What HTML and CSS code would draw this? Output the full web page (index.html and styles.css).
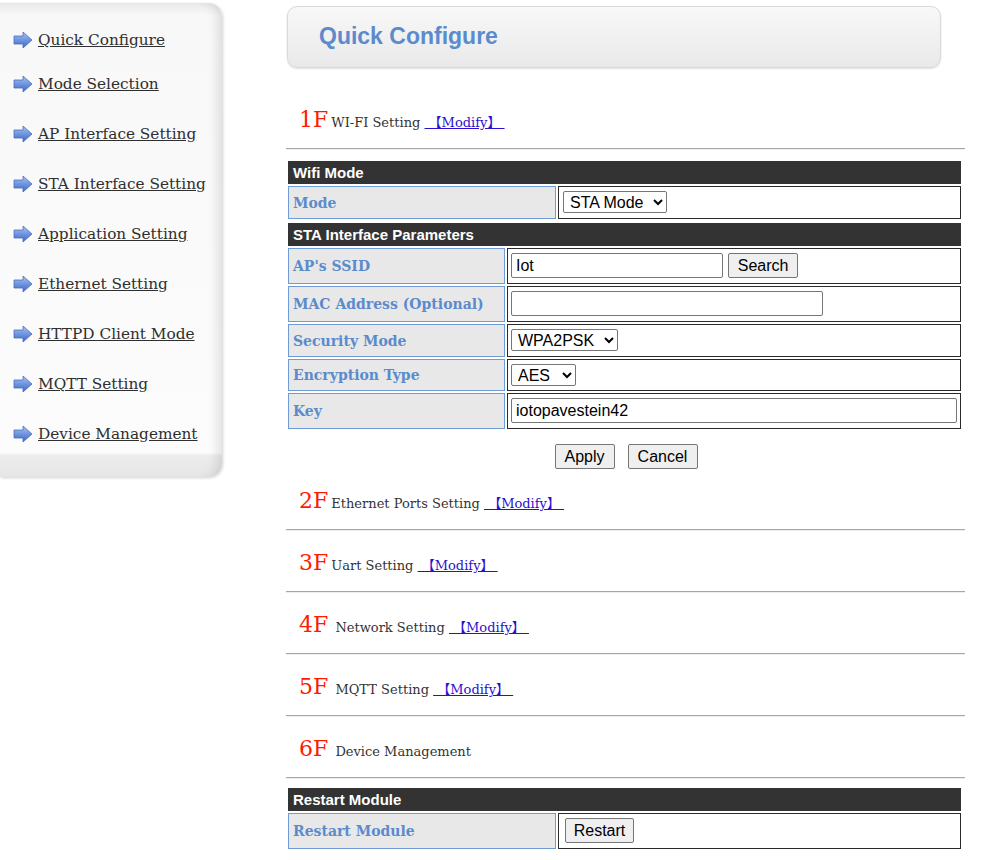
FILE: index.html
```html
<!DOCTYPE html>
<html>
<head>
<meta charset="utf-8">
<title>Quick Configure</title>
<link rel="stylesheet" href="styles.css">
</head>
<body>
<div class="page">
  <nav class="sidebar">
    <ul class="menu">
      <li><a href="#"><svg class="arrow" viewBox="0 0 20 18" width="20" height="18"><defs><linearGradient id="ag" x1="0" y1="0" x2="0" y2="1"><stop offset="0" stop-color="#a9c3f0"/><stop offset="0.5" stop-color="#6f95df"/><stop offset="1" stop-color="#3f66c4"/></linearGradient></defs><path d="M1 5H10V1L19 9L10 17V13H1Z" fill="url(#ag)" stroke="#4a6cc0" stroke-width="0.8" stroke-linejoin="round"/></svg>Quick Configure</a></li>
      <li><a href="#"><svg class="arrow" viewBox="0 0 20 18" width="20" height="18"><path d="M1 5H10V1L19 9L10 17V13H1Z" fill="url(#ag)" stroke="#4a6cc0" stroke-width="0.8" stroke-linejoin="round"/></svg>Mode Selection</a></li>
      <li><a href="#"><svg class="arrow" viewBox="0 0 20 18" width="20" height="18"><path d="M1 5H10V1L19 9L10 17V13H1Z" fill="url(#ag)" stroke="#4a6cc0" stroke-width="0.8" stroke-linejoin="round"/></svg>AP Interface Setting</a></li>
      <li><a href="#"><svg class="arrow" viewBox="0 0 20 18" width="20" height="18"><path d="M1 5H10V1L19 9L10 17V13H1Z" fill="url(#ag)" stroke="#4a6cc0" stroke-width="0.8" stroke-linejoin="round"/></svg>STA Interface Setting</a></li>
      <li><a href="#"><svg class="arrow" viewBox="0 0 20 18" width="20" height="18"><path d="M1 5H10V1L19 9L10 17V13H1Z" fill="url(#ag)" stroke="#4a6cc0" stroke-width="0.8" stroke-linejoin="round"/></svg>Application Setting</a></li>
      <li><a href="#"><svg class="arrow" viewBox="0 0 20 18" width="20" height="18"><path d="M1 5H10V1L19 9L10 17V13H1Z" fill="url(#ag)" stroke="#4a6cc0" stroke-width="0.8" stroke-linejoin="round"/></svg>Ethernet Setting</a></li>
      <li><a href="#"><svg class="arrow" viewBox="0 0 20 18" width="20" height="18"><path d="M1 5H10V1L19 9L10 17V13H1Z" fill="url(#ag)" stroke="#4a6cc0" stroke-width="0.8" stroke-linejoin="round"/></svg>HTTPD Client Mode</a></li>
      <li><a href="#"><svg class="arrow" viewBox="0 0 20 18" width="20" height="18"><path d="M1 5H10V1L19 9L10 17V13H1Z" fill="url(#ag)" stroke="#4a6cc0" stroke-width="0.8" stroke-linejoin="round"/></svg>MQTT Setting</a></li>
      <li><a href="#"><svg class="arrow" viewBox="0 0 20 18" width="20" height="18"><path d="M1 5H10V1L19 9L10 17V13H1Z" fill="url(#ag)" stroke="#4a6cc0" stroke-width="0.8" stroke-linejoin="round"/></svg>Device Management</a></li>
    </ul>
  </nav>

  <main class="main">
    <div class="titlebox"><h1 class="title">Quick Configure</h1></div>

    <div class="floor first"><span class="line"><span class="num">1F</span>WI-FI Setting <a class="modify" href="#">&nbsp;【Modify】&nbsp;</a></span></div>
    <hr class="sep">

    <table class="cfg wide top">
      <tr><th colspan="2" class="bar">Wifi Mode</th></tr>
      <tr>
        <td class="lbl">Mode</td>
        <td class="val tall"><select class="sel sel-mode"><option>STA Mode</option></select></td>
      </tr>
    </table>
    <table class="cfg narrow">
      <tr><th colspan="2" class="bar">STA Interface Parameters</th></tr>
      <tr>
        <td class="lbl">AP's SSID</td>
        <td class="val tall"><input class="txt txt-ssid" type="text" value="Iot"> <button class="btn btn-search">Search</button></td>
      </tr>
      <tr>
        <td class="lbl">MAC Address (Optional)</td>
        <td class="val tall"><input class="txt txt-mac" type="text" value=""></td>
      </tr>
      <tr>
        <td class="lbl">Security Mode</td>
        <td class="val tall"><select class="sel sel-sec"><option>WPA2PSK</option></select></td>
      </tr>
      <tr>
        <td class="lbl">Encryption Type</td>
        <td class="val"><select class="sel sel-enc"><option>AES</option></select></td>
      </tr>
      <tr>
        <td class="lbl">Key</td>
        <td class="val tall"><input class="txt txt-key" type="text" value="iotopavestein42"></td>
      </tr>
    </table>

    <div class="actions"><button class="btn btn-apply">Apply</button><button class="btn btn-cancel">Cancel</button></div>

    <div class="floor"><span class="line"><span class="num">2F</span>Ethernet Ports Setting <a class="modify" href="#">&nbsp;【Modify】&nbsp;</a></span></div>
    <hr class="sep">
    <div class="floor"><span class="line"><span class="num">3F</span>Uart Setting <a class="modify" href="#">&nbsp;【Modify】&nbsp;</a></span></div>
    <hr class="sep">
    <div class="floor"><span class="line"><span class="num">4F</span> Network Setting <a class="modify" href="#">&nbsp;【Modify】&nbsp;</a></span></div>
    <hr class="sep">
    <div class="floor"><span class="line"><span class="num">5F</span> MQTT Setting <a class="modify" href="#">&nbsp;【Modify】&nbsp;</a></span></div>
    <hr class="sep">
    <div class="floor"><span class="line"><span class="num">6F</span> Device Management</span></div>
    <hr class="sep">

    <table class="cfg wide restart">
      <tr><th colspan="2" class="bar">Restart Module</th></tr>
      <tr>
        <td class="lbl">Restart Module</td>
        <td class="val tall"><button class="btn btn-restart">Restart</button></td>
      </tr>
    </table>
  </main>
</div>
</body>
</html>
```

FILE: styles.css
```css
html, body {
  margin: 0;
  padding: 0;
  background: #ffffff;
}

body {
  font-family: "DejaVu Serif", "Liberation Serif", serif;
  color: #333333;
}

.page {
  display: flex;
  align-items: flex-start;
  gap: 64px;
}

/* ---------- sidebar ---------- */
.sidebar {
  flex: 0 0 auto;
  width: 222px;
  box-sizing: border-box;
  margin-top: 3px;
  padding: 25px 0 31px 13px;
  border-radius: 0 14px 14px 0;
  background: linear-gradient(to bottom, #e9e9e9 0, #f8f8f8 12px, #fcfcfc calc(100% - 24px), #ededed calc(100% - 22px), #e6e6e6 100%);
  box-shadow: inset -12px 0 12px -8px rgba(0, 0, 0, 0.12), 1px 1px 3px rgba(0, 0, 0, 0.18);
}

.menu {
  list-style: none;
  margin: 0;
  padding: 0;
}

.menu li {
  height: 24px;
  line-height: 24px;
  margin-bottom: 26px;
}

.menu li:first-child {
  margin-bottom: 20px;
}

.menu li:last-child {
  margin-bottom: 0;
}

.menu a {
  display: inline-flex;
  align-items: center;
  font-size: 15.3px;
  color: #2f2f2f;
  text-decoration: underline;
  white-space: nowrap;
}

.arrow {
  flex: 0 0 auto;
  margin-right: 5px;
}

/* ---------- main ---------- */
.main {
  flex: 0 0 auto;
  width: 679px;
  padding-top: 6px;
}

.titlebox {
  width: 654px;
  height: 62px;
  box-sizing: border-box;
  margin-left: 1px;
  border: 1px solid #d9d9d9;
  border-radius: 10px;
  background: linear-gradient(to bottom, #f8f8f8, #e9e9e9);
  box-shadow: 0 1px 2px rgba(0, 0, 0, 0.12);
  display: flex;
  align-items: center;
  padding-left: 31px;
  padding-bottom: 1px;
}

.title {
  margin: 0;
  font-family: "Liberation Sans", Arial, sans-serif;
  font-weight: bold;
  font-size: 23px;
  color: #5b8bcd;
}

.floor {
  height: 60px;
  display: flex;
  align-items: center;
  padding-left: 13px;
  padding-top: 3px;
  box-sizing: border-box;
}

.floor.first {
  margin-top: 20px;
}

.line {
  font-size: 13px;
  color: #333333;
  white-space: nowrap;
}

.num {
  font-size: 22px;
  color: #ff1a00;
  margin-right: 3px;
}

.modify {
  color: #2a0fd0;
  text-decoration: underline;
  font-family: "DejaVu Serif", "Noto Sans CJK SC", serif;
}

.sep {
  margin: 0;
  height: 0;
  border: none;
  border-top: 1px solid #a6a6a6;
  border-bottom: 1px solid #eeeeee;
}

/* ---------- tables ---------- */
.cfg {
  width: 677px;
  border-collapse: separate;
  border-spacing: 2px;
}

.cfg.top {
  margin-top: 9px;
}

.cfg.restart {
  margin-top: 7px;
}

.bar {
  background: #333333;
  color: #ffffff;
  text-align: left;
  font-family: "Liberation Sans", Arial, sans-serif;
  font-weight: bold;
  font-size: 15px;
  height: 23px;
  padding: 0 5px;
  box-sizing: border-box;
}

.lbl {
  box-sizing: border-box;
  background: #e8e8e8;
  border: 1px solid #6f9bd6;
  color: #5b8bcd;
  font-weight: bold;
  font-size: 14px;
  line-height: 16px;
  padding: 4px 4px;
  white-space: nowrap;
}

.wide .lbl {
  width: 268px;
}

.narrow .lbl {
  width: 219px;
}

.val {
  border: 1px solid #2a2a2a;
  padding: 4px 3px;
  line-height: 16px;
  white-space: nowrap;
}

.val.tall {
  padding-bottom: 5px;
}

.wide .val {
  padding-left: 4px;
}

.txt, .sel, .btn {
  font-family: "Liberation Sans", Arial, sans-serif;
  font-size: 16px;
  box-sizing: border-box;
  vertical-align: middle;
}

.txt {
  height: 25px;
  padding: 1px 4px;
  border: 1px solid #767676;
  border-radius: 2px;
  color: #000;
}

.txt-ssid { width: 212px; }
.txt-mac { width: 312px; }
.txt-key { width: 446px; }

.sel {
  height: 22px;
  padding: 0 0 0 2px;
  border: 1px solid #767676;
  border-radius: 2px;
  background: #fff;
  color: #000;
}

.sel-mode { width: 104px; }
.sel-sec { width: 107px; }
.sel-enc { width: 65px; }

.btn {
  height: 25px;
  padding: 1px 6px;
  border: 1px solid #767676;
  border-radius: 2px;
  background: #efefef;
  color: #000;
}

.btn-search { width: 70px; }
.btn-apply { width: 60px; }
.btn-cancel { width: 70px; margin-left: 13px; }
.btn-restart { width: 69px; margin-left: 2px; }

.actions {
  display: flex;
  justify-content: center;
  padding-left: 1px;
  margin-top: 13px;
  height: 25px;
}
```
